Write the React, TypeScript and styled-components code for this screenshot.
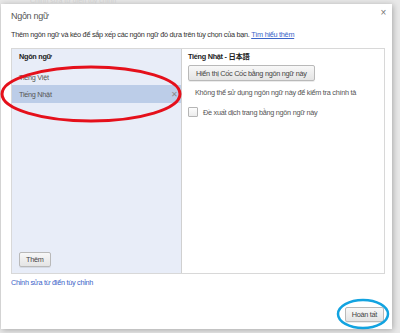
import React from "react";
import styled, { createGlobalStyle } from "styled-components";

const GlobalStyle = createGlobalStyle`
  html, body {
    margin: 0;
    padding: 0;
    background: #e6e6e6;
    font-family: "Liberation Sans", "Noto Sans CJK JP", sans-serif;
  }
`;

const Page = styled.div`
  position: relative;
  width: 400px;
  height: 333px;
  overflow: hidden;
  background: #e8e8e8;
`;

const BehindText = styled.div`
  height: 4px;
  overflow: hidden;
  padding-left: 30px;
  font-size: 7px;
  line-height: 2px;
  color: #cfcfcf;
`;

const Dialog = styled.div`
  margin-left: 1px;
  width: 391px;
  height: 325px;
  background: #fff;
  box-shadow: 1px 1px 6px rgba(0, 0, 0, 0.28);
  display: flex;
  flex-direction: column;
  padding: 0 8px 0 10px;
  box-sizing: border-box;
  font-size: 7.3px;
  letter-spacing: -0.28px;
  color: #333;
`;

const TitleBar = styled.div`
  display: flex;
  justify-content: space-between;
  align-items: center;
  height: 24px;
`;

const Title = styled.div`
  font-size: 9px;
  letter-spacing: -0.3px;
  color: #555;
`;

const Close = styled.div`
  font-size: 10px;
  color: #777;
  margin-right: -2px;
  margin-top: -8px;
`;

const Description = styled.div`
  margin-top: 1px;
  height: 12px;
  line-height: 12px;
  color: #333;
`;

const Link = styled.a<{ $underline?: boolean }>`
  color: #3a64c8;
  text-decoration: ${({ $underline }) => ($underline ? "underline" : "none")};
`;

const Panels = styled.div`
  margin-top: 7px;
  height: 226px;
  box-sizing: border-box;
  display: flex;
  border: 1px solid #d8d8d8;
  margin-right: -1px;
`;

const ListPane = styled.div`
  width: 169px;
  background: #e8edf8;
  border-right: 1px solid #d0d0d0;
  display: flex;
  flex-direction: column;
  padding-top: 1px;
`;

const ListHeader = styled.div`
  font-weight: bold;
  padding-left: 7px;
  height: 14px;
  line-height: 14px;
  color: #222;
`;

const ListItem = styled.div<{ $selected?: boolean }>`
  display: flex;
  justify-content: space-between;
  align-items: center;
  height: ${({ $selected }) => ($selected ? "18px" : "16px")};
  padding: 0 3px 0 7px;
  margin-top: ${({ $selected }) => ($selected ? "0" : "5px")};
  background: ${({ $selected }) => ($selected ? "#bccde8" : "transparent")};
  color: #555;
`;

const Remove = styled.span`
  font-size: 8px;
  color: #8a8a8a;
`;

const Spacer = styled.div`
  flex: 1;
`;

const Button = styled.button`
  font-family: inherit;
  font-size: 7.3px;
  letter-spacing: -0.28px;
  color: #444;
  height: 15px;
  padding: 0 6px;
  border: 1px solid #b9b9b9;
  border-radius: 2px;
  background: linear-gradient(#f8f8f8, #e4e4e4);
  box-shadow: 0 1px 0 rgba(0, 0, 0, 0.08);
  line-height: 13px;
`;

const AddRow = styled.div`
  padding: 0 0 6px 7px;
`;

const DetailPane = styled.div`
  flex: 1;
  padding: 1px 6px 0 6px;
  display: flex;
  flex-direction: column;
  align-items: flex-start;
`;

const DetailTitle = styled.div`
  font-weight: bold;
  height: 14px;
  line-height: 14px;
  color: #222;
`;

const DetailButton = styled(Button)`
  margin-top: 1px;
  height: 16px;
  padding: 0 7px;
`;

const Note = styled.div`
  margin-top: 5px;
  padding-left: 7px;
  color: #555;
  height: 14px;
  line-height: 14px;
`;

const CheckRow = styled.label`
  margin-top: 7px;
  height: 10px;
  display: flex;
  align-items: center;
  gap: 5px;
  color: #555;
`;

const Box = styled.span`
  width: 8px;
  height: 8px;
  border: 1px solid #b5b5b5;
  border-radius: 1px;
  background: linear-gradient(#fdfdfd, #ececec);
`;

const EditRow = styled.div`
  margin-top: 3px;
  height: 12px;
  line-height: 12px;
`;

const Footer = styled.div`
  flex: 1;
  display: flex;
  justify-content: flex-end;
  align-items: flex-end;
  padding-bottom: 7px;
`;

const Annotation = styled.svg`
  position: absolute;
  left: 0;
  top: 0;
  pointer-events: none;
`;

export default function App() {
  return (
    <Page>
      <GlobalStyle />
      <BehindText>Chỉnh sửa từ điển tùy chỉnh</BehindText>
      <Dialog>
        <TitleBar>
          <Title>Ngôn ngữ</Title>
          <Close>×</Close>
        </TitleBar>
        <Description>
          Thêm ngôn ngữ và kéo để sắp xếp các ngôn ngữ đó dựa trên tùy chọn của bạn.{" "}
          <Link $underline>Tìm hiểu thêm</Link>
        </Description>
        <Panels>
          <ListPane>
            <ListHeader>Ngôn ngữ</ListHeader>
            <ListItem>Tiếng Việt</ListItem>
            <ListItem $selected>
              Tiếng Nhật
              <Remove>✕</Remove>
            </ListItem>
            <Spacer />
            <AddRow>
              <Button>Thêm</Button>
            </AddRow>
          </ListPane>
          <DetailPane>
            <DetailTitle>Tiếng Nhật - 日本語</DetailTitle>
            <DetailButton>Hiển thị Cốc Cốc bằng ngôn ngữ này</DetailButton>
            <Note>Không thể sử dụng ngôn ngữ này để kiểm tra chính tả</Note>
            <CheckRow>
              <Box />
              Đề xuất dịch trang bằng ngôn ngữ này
            </CheckRow>
          </DetailPane>
        </Panels>
        <EditRow>
          <Link>Chỉnh sửa từ điển tùy chỉnh</Link>
        </EditRow>
        <Footer>
          <Button>Hoàn tất</Button>
        </Footer>
      </Dialog>
      <Annotation width="400" height="333">
        <ellipse cx="91" cy="94" rx="89" ry="27" fill="none" stroke="#e5101b" strokeWidth="3" />
        <ellipse cx="363" cy="314" rx="25" ry="14" fill="none" stroke="#12a3e0" strokeWidth="2.5" />
      </Annotation>
    </Page>
  );
}
